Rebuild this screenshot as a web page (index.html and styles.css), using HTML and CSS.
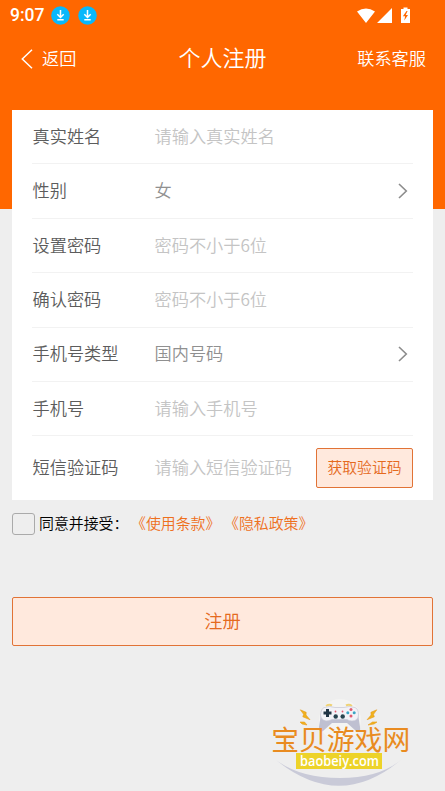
FILE: index.html
```html
<!DOCTYPE html>
<html lang="zh-CN">
<head>
<meta charset="utf-8">
<title>个人注册</title>
<link rel="stylesheet" href="styles.css">
</head>
<body>
<header class="top">
  <div class="status">
    <span class="time">9:07</span>
    <svg class="dl" viewBox="0 0 19 19"><circle cx="9.5" cy="9.5" r="9.3" fill="#08b8fb"/><path d="M9.5 4v7M6.3 8.3l3.2 3.2 3.2-3.2M6.3 13.8h6.4" fill="none" stroke="#fff" stroke-width="1.5"/></svg>
    <svg class="dl" viewBox="0 0 19 19"><circle cx="9.5" cy="9.5" r="9.3" fill="#08b8fb"/><path d="M9.5 4v7M6.3 8.3l3.2 3.2 3.2-3.2M6.3 13.8h6.4" fill="none" stroke="#fff" stroke-width="1.5"/></svg>
    <svg class="signals" viewBox="0 0 56 18"><path d="M0 4.500Q9-1.500 18 4.500L9 16zM35 1v15H20z" fill="#fff"/><path d="M44 2h2.500V.5h4V2H53v14h-9z" fill="#fff"/><path d="M49.500 4l-3.600 5.200h2.200l-.8 4.300 3.700-5.500h-2.300l1.900-4z" fill="#ff6700"/></svg>
  </div>
  <nav class="nav">
    <a class="back"><svg viewBox="0 0 12 20"><path d="M11 .7L1.300 10 11 19.300" fill="none" stroke="#fff" stroke-width="1.500"/></svg><span>返回</span></a>
    <h1>个人注册</h1>
    <a class="service">联系客服</a>
  </nav>
</header>
<main>
  <form class="card">
    <div class="row"><label>真实姓名</label><span class="hint">请输入真实姓名</span></div>
    <div class="row"><label>性别</label><span class="value">女</span><svg class="chev" viewBox="0 0 10 16"><path d="M1 1l7.300 7L1 15" fill="none" stroke="#8c8c8c" stroke-width="1.600"/></svg></div>
    <div class="row"><label>设置密码</label><span class="hint">密码不小于6位</span></div>
    <div class="row"><label>确认密码</label><span class="hint">密码不小于6位</span></div>
    <div class="row"><label>手机号类型</label><span class="value">国内号码</span><svg class="chev" viewBox="0 0 10 16"><path d="M1 1l7.300 7L1 15" fill="none" stroke="#8c8c8c" stroke-width="1.600"/></svg></div>
    <div class="row"><label>手机号</label><span class="hint">请输入手机号</span></div>
    <div class="row last"><label>短信验证码</label><span class="hint">请输入短信验证码</span><button type="button" class="code">获取验证码</button></div>
  </form>
  <div class="agree"><span class="box"></span><span class="accept">同意并接受：</span><a>《使用条款》</a><a>《隐私政策》</a></div>
  <button type="button" class="submit">注册</button>
</main>
<svg class="mark" viewBox="0 0 160 101">
  <circle cx="80" cy="30" r="21" fill="#f4f4f3"/>
  <path d="M16 70Q80 122 142 69Q120 88 80 88Q40 88 16 70z" fill="#c9cad8"/>
  <path d="M66 16q3-2 6-.5M86 15.500q3-1.500 6 .5" stroke="#efd275" stroke-width="2" fill="none"/>
  <path d="M61 24L59 37Q59 43 63 41L72 33H87L96 41Q101 43 100 37L98 24z" fill="#bfc0d1"/>
  <path d="M64 17.500Q70 15.500 75 17.500H84Q89 15.500 95 17.500Q98.500 19 98.500 25Q98 31 92 31Q89 31 87 29.500H72Q69 31 66 31Q61 30 60.500 25Q61 19 64 17.500z" fill="#f2f2f7" stroke="#c5c6d4" stroke-width=".7"/>
  <path d="M67.500 19v8M63.500 23h8" stroke="#203445" stroke-width="3"/>
  <g fill="#27434f"><circle cx="75.700" cy="26.500" r="2.200"/><circle cx="82.700" cy="26.500" r="2.200"/></g>
  <g fill="#e05b70"><circle cx="91" cy="19.500" r="1.500"/><circle cx="91" cy="26" r="1.500"/><circle cx="75.500" cy="21.500" r=".9"/><circle cx="82.500" cy="21.500" r=".9"/></g>
  <g fill="#3ba4c4"><circle cx="87.800" cy="22.800" r="1.500"/><circle cx="94.200" cy="22.800" r="1.500"/></g>
  <path d="M40.300 19.800L46.200 22.300 46 25 50 29.700 42.800 26.800 43.600 24.300zM116.800 19.800L110.900 22.300 111.100 25 107.100 29.700 114.300 26.800 113.500 24.300zM40 32h4.500l2.500 3-5-1zM117 32h-4.500l-4.500 3 6-1z" fill="#f0b21c" stroke="#e89a1c" stroke-width=".6"/>
  <text class="brand" x="11.200" y="59.500">宝贝游戏网</text>
  <path d="M36 63H122V79H36z" fill="#edd329"/>
  <text class="domain" x="79.500" y="76" text-anchor="middle" textLength="79" lengthAdjust="spacingAndGlyphs">baobeiy.com</text>
</svg>
</body>
</html>
```
FILE: styles.css
```css
* { box-sizing: border-box; }
body {
  margin: 0;
  height: 791px;
  overflow: hidden;
  position: relative;
  background: #eee;
  font-family: "Noto Sans CJK SC", sans-serif;
  font-weight: 350;
  font-size: 17.200px;
  line-height: 1.2;
}
button { font: inherit; padding: 0 0 2px; color: #e56a1e; background: #ffe9dd; border: 1px solid #e17336; border-radius: 2px; }
.top { height: 209px; background: #ff6700; color: #fff; }
.status { height: 31px; padding: 0 32px 0 10px; display: flex; align-items: center; }
.time { font-family: Roboto, sans-serif; font-size: 17.500px; font-weight: 500; width: 41px; }
.dl { width: 19px; height: 19px; margin-right: 8px; }
.signals { width: 56px; height: 18px; margin-left: auto; }
.nav { height: 56px; padding: 0 19px 0 21px; display: grid; grid-template-columns: 1fr auto 1fr; align-items: center; }
.back { display: flex; align-items: center; gap: 9px; }
.back span, .service { padding-bottom: 1px; }
.back svg { width: 12px; height: 20px; }
.nav h1 { margin: 0; padding: 0 2px 6px 0; font-size: 22px; font-weight: 350; }
.service { text-align: right; }
main { margin-top: -99px; padding: 0 12px; }
.card { height: 390px; background: #fff; padding: 0 20px; }
.row { height: 54.400px; display: flex; align-items: center; border-bottom: 1px solid #f2f2f2; color: #5c5c5c; white-space: nowrap; }
.row label { width: 122px; padding: 0 0 1px .5px; }
.hint, .value { padding: 0 0 1px .5px; }
.hint { color: #c4c4c4; }
.value { color: #909090; }
.chev { width: 10px; height: 16px; margin-left: auto; margin-right: 5px; }
.last { height: 63.600px; border: 0; }
.code { margin-left: auto; width: 97px; height: 40px; font-size: 14.800px; }
.agree { height: 48px; display: flex; align-items: center; font-size: 14.900px; color: #000; font-feature-settings: "halt"; }
.agree a { color: #ee701d; width: 93px; padding: 0 0 2px 7.500px; }
.box { width: 23px; height: 22px; border: 1px solid #aaa; border-radius: 3px; margin-right: 4px; }
.accept { width: 92px; padding-bottom: 2px; }
.submit { display: block; width: 100%; height: 49px; margin-top: 49px; font-size: 18.300px; }
.mark { position: absolute; left: 260px; top: 690px; width: 160px; height: 101px; }
.brand { font-size: 27.800px; font-weight: 400; fill: #e98b20; }
.domain { font-family: "Open Sans", sans-serif; font-size: 14.500px; font-weight: 600; fill: #fff; }
```
